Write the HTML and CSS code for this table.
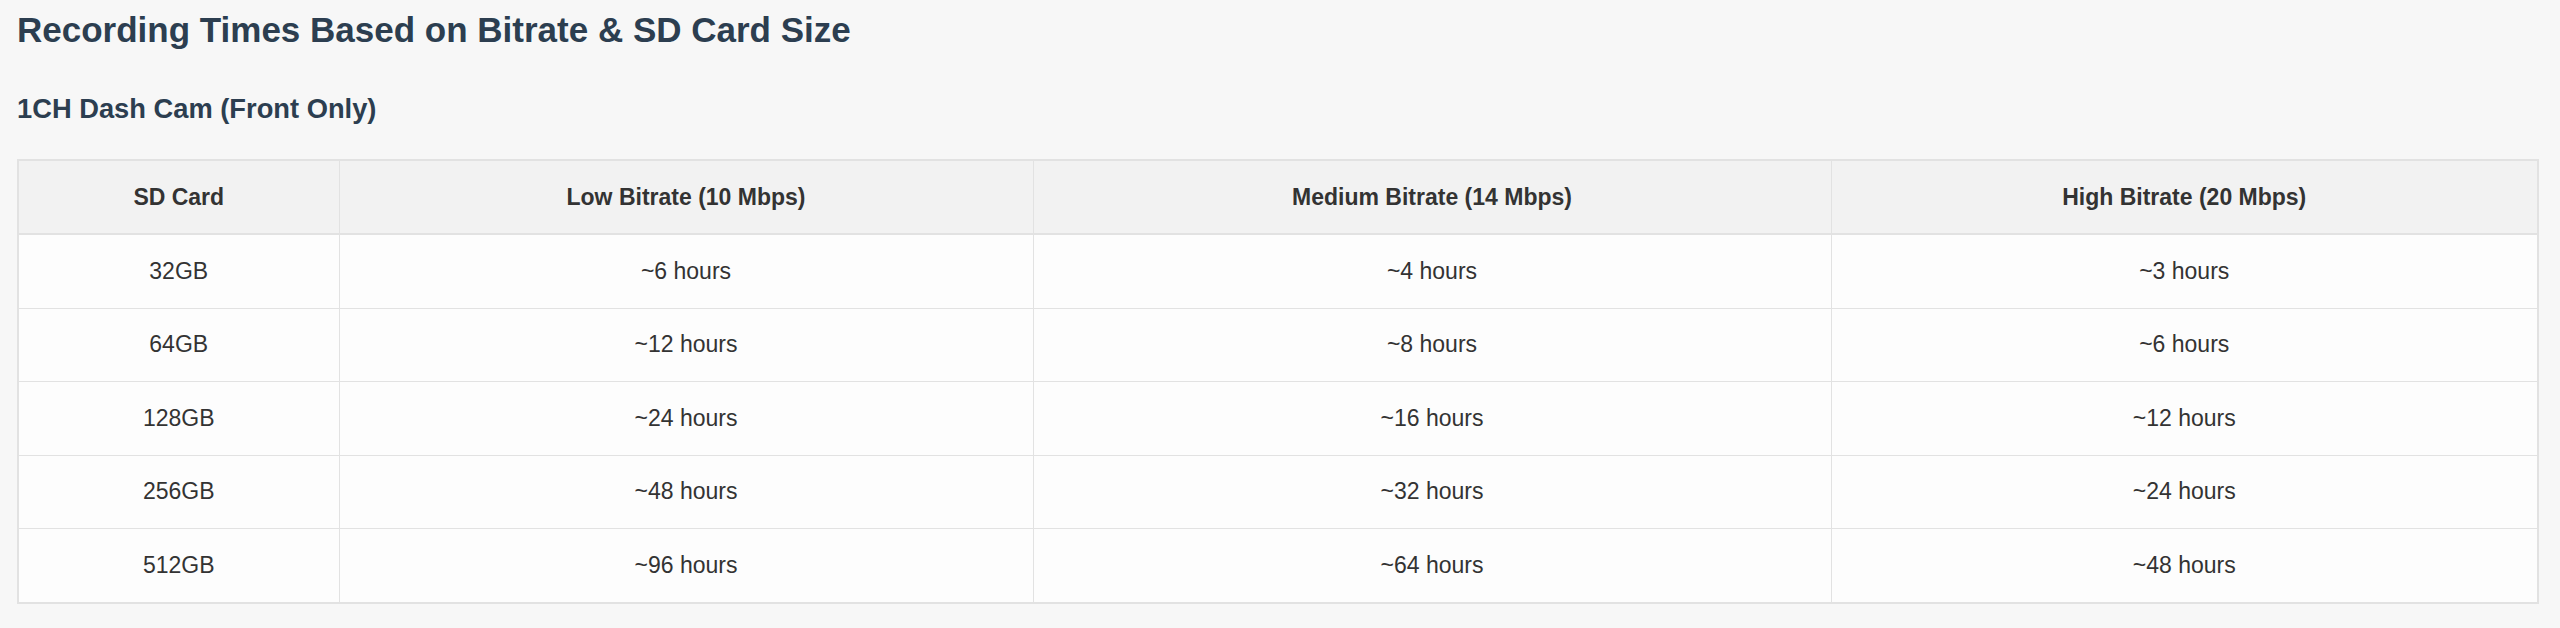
FILE: index.html
```html
<!DOCTYPE html>
<html lang="en">
<head>
<meta charset="utf-8">
<title>Recording Times</title>
<link rel="stylesheet" href="styles.css">
</head>
<body>
<main class="page">
  <h2 class="title">Recording Times Based on Bitrate &amp; SD Card Size</h2>
  <h3 class="subtitle">1CH Dash Cam (Front Only)</h3>
  <table class="rec-table">
    <colgroup>
      <col class="c1"><col class="c2"><col class="c3"><col class="c4">
    </colgroup>
    <thead>
      <tr>
        <th>SD Card</th>
        <th>Low Bitrate (10 Mbps)</th>
        <th>Medium Bitrate (14 Mbps)</th>
        <th>High Bitrate (20 Mbps)</th>
      </tr>
    </thead>
    <tbody>
      <tr><td>32GB</td><td>~6 hours</td><td>~4 hours</td><td>~3 hours</td></tr>
      <tr><td>64GB</td><td>~12 hours</td><td>~8 hours</td><td>~6 hours</td></tr>
      <tr><td>128GB</td><td>~24 hours</td><td>~16 hours</td><td>~12 hours</td></tr>
      <tr><td>256GB</td><td>~48 hours</td><td>~32 hours</td><td>~24 hours</td></tr>
      <tr><td>512GB</td><td>~96 hours</td><td>~64 hours</td><td>~48 hours</td></tr>
    </tbody>
  </table>
</main>
</body>
</html>
```

FILE: styles.css
```css
html, body {
  margin: 0;
  padding: 0;
  background: #f7f7f7;
}

body {
  font-family: "Liberation Sans", Arial, Helvetica, sans-serif;
  color: #333333;
}

.page {
  padding: 8px 21px 20px 17px;
}

.title {
  margin: 0 0 43px 0;
  font-size: 35px;
  line-height: 43px;
  font-weight: 700;
  color: #2c3e50;
}

.subtitle {
  margin: 0 0 36px 0;
  font-size: 27.3px;
  line-height: 29px;
  font-weight: 700;
  color: #2c3e50;
}

.rec-table {
  width: 100%;
  border-collapse: collapse;
  table-layout: fixed;
  border: 2px solid #e2e2e2;
  background: #fdfdfd;
}

.rec-table .c1 { width: 321px; }
.rec-table .c2 { width: 694px; }
.rec-table .c3 { width: 798px; }
.rec-table .c4 { width: auto; }

.rec-table th,
.rec-table td {
  border: 1px solid #e2e2e2;
  text-align: center;
  font-size: 23px;
  color: #333333;
  padding: 0;
}

.rec-table th {
  height: 72px;
  background: #f2f2f2;
  font-weight: 700;
  border-bottom: 2px solid #e2e2e2;
}

.rec-table td {
  height: 72.5px;
  font-weight: 400;
}
```
